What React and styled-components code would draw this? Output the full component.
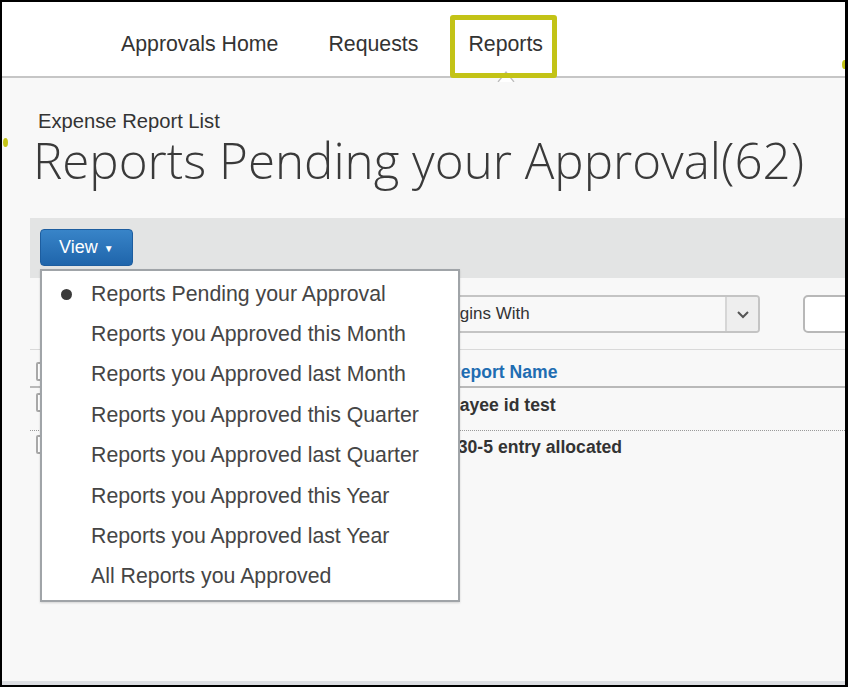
import React from "react";
import styled, { createGlobalStyle } from "styled-components";

const GlobalStyle = createGlobalStyle`
  html, body {
    margin: 0;
    padding: 0;
    background: #000;
  }
  * {
    box-sizing: border-box;
  }
`;

const Frame = styled.div`
  position: relative;
  width: 848px;
  height: 687px;
  border-style: solid;
  border-color: #000;
  border-width: 2px 3px 2px 2px;
  background: #f8f8f8;
  display: flex;
  flex-direction: column;
  overflow: hidden;
  font-family: "Liberation Sans", Arial, sans-serif;
`;

const Nav = styled.div`
  height: 76px;
  flex-shrink: 0;
  background: #fff;
  border-bottom: 2px solid #c6c6c6;
  display: flex;
  align-items: center;
  gap: 50px;
  padding: 9px 0 0 119px;
`;

const NavItem = styled.div`
  position: relative;
  font-size: 21.3px;
  color: #333;
  line-height: 24px;
`;

const Notch = styled.svg`
  position: absolute;
  left: 50%;
  top: 38px;
  margin-left: -9px;
`;

const Highlight = styled.div`
  position: absolute;
  left: -18px;
  top: -17px;
  width: 107px;
  height: 63px;
  border: 5px solid #c3c316;
  border-radius: 3px;
`;

const Spot = styled.div`
  position: absolute;
  width: 5px;
  height: 9px;
  border-radius: 50%;
  background: #c3c316;
`;

const Main = styled.div`
  flex: 1;
  padding: 31px 0 0 28px;
  display: flex;
  flex-direction: column;
`;

const Heading = styled.div`
  padding-left: 8px;
`;

const Subtitle = styled.div`
  font-size: 20.2px;
  line-height: 24px;
  color: #333;
`;

const Title = styled.h1`
  margin: 0;
  margin-left: -5px;
  font-family: "Open Sans", sans-serif;
  font-weight: 300;
  font-size: 49.3px;
  line-height: 54px;
  color: #3a3a3a;
`;

const Toolbar = styled.div`
  position: relative;
  margin-top: 31px;
  height: 60px;
  background: #e3e4e4;
  padding: 11px 0 0 10px;
`;

const ViewButton = styled.button`
  width: 93px;
  height: 37px;
  border: 1px solid #1d5d9f;
  border-radius: 4px;
  background: linear-gradient(#3884c8, #1f65ab);
  color: #fff;
  font-family: "Liberation Sans", Arial, sans-serif;
  font-size: 18px;
  display: flex;
  align-items: center;
  padding: 0 0 0 18px;
  gap: 6px;
`;

const Caret = styled.span`
  font-size: 10px;
  margin-top: 1px;
`;

const Menu = styled.div`
  position: absolute;
  top: 51px;
  left: 10px;
  width: 420px;
  height: 333px;
  background: #fff;
  border: 2px solid #a0a4a8;
  box-shadow: 0 1px 2px rgba(0, 0, 0, 0.15);
  padding-top: 3px;
  z-index: 5;
`;

const MenuItem = styled.div`
  position: relative;
  height: 40.4px;
  display: flex;
  align-items: center;
  padding-left: 49px;
  font-size: 21.3px;
  color: #454545;
  white-space: nowrap;
`;

const Bullet = styled.span`
  position: absolute;
  left: 19px;
  top: 50%;
  width: 11px;
  height: 11px;
  margin-top: -5px;
  border-radius: 50%;
  background: #3a3a3a;
`;

const FilterRow = styled.div`
  display: flex;
  align-items: center;
  gap: 43px;
  padding: 17px 0 0 405px;
  height: 55px;
  flex-shrink: 0;
`;

const Select = styled.div`
  width: 325px;
  height: 38px;
  flex-shrink: 0;
  display: flex;
  border: 2px solid #c4c4c4;
  border-radius: 4px;
  background: #f8f8f8;
  overflow: hidden;
`;

const SelectText = styled.div`
  flex: 1;
  display: flex;
  align-items: center;
  padding-left: 2px;
  font-size: 17px;
  color: #333;
`;

const SelectArrow = styled.div`
  width: 33px;
  border-left: 2px solid #d6d6d6;
  background: #eee;
  display: flex;
  align-items: center;
  justify-content: center;
`;

const TextInput = styled.div`
  width: 80px;
  height: 38px;
  flex-shrink: 0;
  border: 2px solid #b8b8b8;
  border-radius: 5px;
  background: #fff;
`;

const Table = styled.div`
  margin-top: 16px;
  border-top: 1px solid #d9d9d9;
`;

const Row = styled.div`
  display: flex;
  align-items: flex-start;
  height: ${(p) => p.$height}px;
  padding-top: ${(p) => p.$pad}px;
  border-bottom: ${(p) => p.$border};
`;

const CheckCell = styled.div`
  width: 418px;
  padding-left: 6px;
  flex-shrink: 0;
`;

const Check = styled.span`
  display: block;
  width: 14px;
  height: 19px;
  border: 2px solid #a8a8a8;
  border-radius: 2px;
  background: #fff;
`;

const NameCell = styled.div`
  font-weight: bold;
  font-size: 17.6px;
  line-height: 20px;
  margin-top: ${(p) => (p.$head ? 0 : 2)}px;
  color: ${(p) => (p.$head ? "#1f6db2" : "#333")};
  white-space: nowrap;
`;

const Footer = styled.div`
  height: 4px;
  flex-shrink: 0;
  background: #dcdee2;
`;

const views = [
  "Reports Pending your Approval",
  "Reports you Approved this Month",
  "Reports you Approved last Month",
  "Reports you Approved this Quarter",
  "Reports you Approved last Quarter",
  "Reports you Approved this Year",
  "Reports you Approved last Year",
  "All Reports you Approved",
];

const rows = ["Payee id test", "130-5 entry allocated"];

const App = () => {
  return (
    <>
      <GlobalStyle />
      <Frame>
        <Nav>
          <NavItem>Approvals Home</NavItem>
          <NavItem>Requests</NavItem>
          <NavItem>
            Reports
            <Notch width="18" height="12" viewBox="0 0 18 12">
              <path d="M1 12 L9 2 L17 12" fill="#fff" stroke="#bdbdbd" strokeWidth="1.3" />
            </Notch>
            <Highlight />
          </NavItem>
        </Nav>
        <Main>
          <Heading>
            <Subtitle>Expense Report List</Subtitle>
            <Title>Reports Pending your Approval(62)</Title>
          </Heading>
          <Toolbar>
            <ViewButton>
              View <Caret>▼</Caret>
            </ViewButton>
            <Menu>
              {views.map((v, i) => (
                <MenuItem key={v}>
                  {i === 0 && <Bullet />}
                  {v}
                </MenuItem>
              ))}
            </Menu>
          </Toolbar>
          <FilterRow>
            <Select>
              <SelectText>Begins With</SelectText>
              <SelectArrow>
                <svg width="14" height="9" viewBox="0 0 14 9">
                  <path d="M2 2 L7 7 L12 2" fill="none" stroke="#555" strokeWidth="2" />
                </svg>
              </SelectArrow>
            </Select>
            <TextInput />
          </FilterRow>
          <Table>
            <Row $height={38} $pad={12} $border="2px solid #b9b9b9">
              <CheckCell>
                <Check />
              </CheckCell>
              <NameCell $head>Report Name</NameCell>
            </Row>
            {rows.map((r, i) => (
              <Row
                key={r}
                $height={i === 0 ? 43 : 42}
                $pad={i === 0 ? 5 : 4}
                $border={i === 0 ? "1px dotted #9a9a9a" : "none"}
              >
                <CheckCell>
                  <Check />
                </CheckCell>
                <NameCell>{r}</NameCell>
              </Row>
            ))}
          </Table>
        </Main>
        <Footer />
        <Spot style={{ left: 1, top: 136 }} />
        <Spot style={{ right: -2, top: 58 }} />
      </Frame>
    </>
  );
};

export default App;
